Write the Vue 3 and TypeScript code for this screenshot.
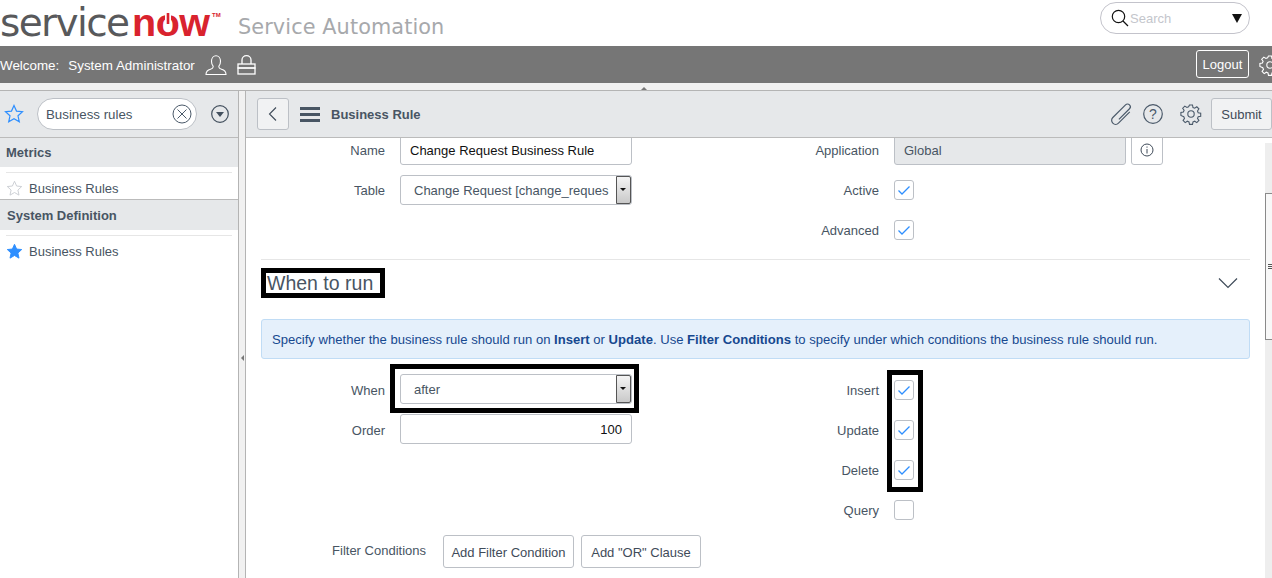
<template>
  <div class="page">
    <header class="brand">
      <svg class="logo" viewBox="0 0 238 46" width="238" height="46">
        <text class="logo-service" x="0" y="36.200" textLength="130" lengthAdjust="spacing">service</text>
        <text class="logo-now" x="132" y="36" textLength="78" lengthAdjust="spacing">now</text>
        <rect x="165" y="13" width="6" height="9" fill="#fff" />
        <rect x="166.700" y="13" width="2.600" height="11" fill="#d9232e" />
        <text class="logo-tm" x="212" y="17">TM</text>
      </svg>
      <div class="product">Service Automation</div>
      <div class="global-search">
        <svg class="search-icon" viewBox="0 0 18 18" width="18" height="18" fill="none" stroke="#111" stroke-width="1.2">
          <circle cx="7.5" cy="7.5" r="6.2" />
          <path d="M12 12l5 5" />
        </svg>
        <span class="search-text">Search</span>
        <span class="search-caret"></span>
      </div>
    </header>

    <div class="topbar">
      <span class="welcome">Welcome:</span>
      <span class="username">System Administrator</span>
      <svg class="user-icon" viewBox="0 0 22 20" width="22" height="20" fill="none" stroke="#fff" stroke-width="1.1">
        <path d="M1 19.5h20c0-3-1.5-4.5-4.5-5.3-2.2-.6-3-1.4-2.6-3 1-1.200 1.600-3 1.600-5C15.500 3 13.500.7 11 .7S6.500 3 6.500 6.200c0 2 .6 3.800 1.600 5 .4 1.600-.4 2.400-2.600 3C2.500 15 1 16.500 1 19.500z" />
      </svg>
      <svg class="lock-icon" viewBox="0 0 19 20" width="19" height="20" fill="none" stroke="#fff" stroke-width="1.3">
        <path d="M5 9V5c0-2.500 2-4.300 4.500-4.300S14 2.500 14 5v4" />
        <rect x="1" y="9" width="17" height="4" />
        <rect x="1" y="13" width="17" height="6" />
      </svg>
      <button class="logout">Logout</button>
      <svg class="gear top-gear" viewBox="0 0 20 20" width="20" height="20"><path :d="gearPath" /><circle cx="10" cy="10" r="3.200" /></svg>
    </div>

    <div class="collapse-strip"><span class="up-caret"></span></div>

    <div class="workspace">
      <aside class="sidebar">
        <div class="filter-bar">
          <svg class="filter-star" viewBox="0 0 20 20" width="20" height="20" fill="none" stroke="#2e8fff" stroke-width="1.200"><path :d="starPath" /></svg>
          <div class="filter-pill">
            <span>Business rules</span>
            <svg viewBox="0 0 20 20" width="20" height="20" fill="none" stroke="#4b5a6a" stroke-width="1"><circle cx="10" cy="10" r="9" /><path d="M5.500 5.500l9 9M14.500 5.500l-9 9" /></svg>
          </div>
          <svg class="filter-menu" viewBox="0 0 18 18" width="18" height="18"><circle cx="9" cy="9" r="8.300" fill="none" stroke="#43505e" stroke-width="1.200" /><path d="M5 7h8l-4 5z" fill="#43505e" /></svg>
        </div>

        <template v-for="group in navGroups" :key="group.title">
          <div class="nav-title" :class="group.cls">{{ group.title }}</div>
          <div class="nav-body" :class="group.cls">
            <div class="nav-rule"></div>
            <div class="nav-item">
              <svg viewBox="0 0 20 20" width="17" height="17" :fill="group.starred ? '#2e8fff' : 'none'" :stroke="group.starred ? '#2e8fff' : '#c9cdd2'" stroke-width="1.100"><path :d="starPath" /></svg>
              <span>Business Rules</span>
            </div>
          </div>
        </template>
      </aside>

      <div class="splitter"><span class="left-caret"></span></div>

      <main class="content">
        <div class="content-head">
          <button class="back-btn">
            <svg viewBox="0 0 10 16" width="10" height="16" fill="none" stroke="#3f4b59" stroke-width="1.100"><path d="M8 1.500L1.500 8 8 14.500" /></svg>
          </button>
          <div class="burger"><i></i><i></i><i></i></div>
          <div class="head-title">Business Rule</div>
          <svg class="clip-icon" viewBox="0 0 20 20" width="20" height="20" fill="none" stroke="#4b5a6a" stroke-width="1.200">
            <path transform="rotate(45 10 10)" d="M14 3V19a4 4 0 0 1-8 0V1a2.800 2.800 0 0 1 5.600 0V16" />
          </svg>
          <svg class="help-icon" viewBox="0 0 20 20" width="20" height="20"><circle cx="10" cy="10" r="9.300" fill="none" stroke="#4b5a6a" stroke-width="1.200" /><text x="10" y="15" text-anchor="middle">?</text></svg>
          <svg class="gear head-gear" viewBox="0 0 20 20" width="20" height="20"><path :d="gearPath" /><circle cx="10" cy="10" r="3.200" /></svg>
          <button class="submit">Submit</button>
        </div>

        <div class="scroller">
          <div class="form">
            <div class="columns first-block">
              <div class="col">
                <div class="row">
                  <label>Name</label>
                  <div class="field">Change Request Business Rule</div>
                </div>
                <div class="row">
                  <label>Table</label>
                  <div class="select">
                    <span>Change Request [change_reques</span>
                    <span class="select-arrow"></span>
                  </div>
                </div>
              </div>
              <div class="col">
                <div class="row">
                  <label>Application</label>
                  <div class="field readonly">Global</div>
                  <button class="info-btn">
                    <svg viewBox="0 0 14 14" width="14" height="14" fill="none" stroke="#3f4b59" stroke-width="1"><circle cx="7" cy="7" r="6" /><path d="M7 6v4.500M7 3.500v1.200" /></svg>
                  </button>
                </div>
                <div v-for="name in ['Active', 'Advanced']" :key="name" class="row">
                  <label>{{ name }}</label>
                  <span class="check"><svg viewBox="0 0 20 20" width="20" height="20" v-html="tick"></svg></span>
                </div>
              </div>
            </div>

            <div class="section-head">
              <h2 class="section-title"><span class="mark-box"></span>When to run</h2>
              <svg viewBox="0 0 20 12" width="20" height="12" fill="none" stroke="#3f4b59" stroke-width="1.200"><path d="M1 1.500l9 9 9-9" /></svg>
            </div>

            <div class="info-bar">Specify whether the business rule should run on <b>Insert</b> or <b>Update</b>. Use <b>Filter Conditions</b> to specify under which conditions the business rule should run.</div>

            <div class="columns second-block">
              <div class="col">
                <div class="row">
                  <label>When</label>
                  <div class="select marked">
                    <span>after</span>
                    <span class="select-arrow"></span>
                    <span class="mark-box"></span>
                  </div>
                </div>
                <div class="row">
                  <label>Order</label>
                  <div class="field number">100</div>
                </div>
              </div>
              <div class="col">
                <div class="check-group">
                  <span class="mark-box"></span>
                  <div v-for="name in ['Insert', 'Update', 'Delete']" :key="name" class="row">
                    <label>{{ name }}</label>
                    <span class="check"><svg viewBox="0 0 20 20" width="20" height="20" v-html="tick"></svg></span>
                  </div>
                </div>
                <div class="row">
                  <label>Query</label>
                  <span class="check"></span>
                </div>
              </div>
            </div>

            <div class="filter-row">
              <label>Filter Conditions</label>
              <button>Add Filter Condition</button>
              <button>Add "OR" Clause</button>
            </div>
          </div>

          <div class="scrollbar">
            <span class="thumb"><i class="grip"></i></span>
          </div>
        </div>
      </main>
    </div>
  </div>
</template>

<script setup lang="ts">
const starPath = 'M10 1.500l2.500 5.600 6 .6-4.500 4.100 1.300 6L10 14.700l-5.300 3.100 1.300-6L1.500 7.700l6-.6z'

const gearPath =
  'M8.500 1h3l.5 2.500 1.700.7 2.100-1.400 2.100 2.100-1.400 2.100.7 1.700 2.500.5v3l-2.500.5-.7 1.700 1.400 2.100-2.100 2.100-2.100-1.400-1.700.7-.5 2.500h-3l-.5-2.500-1.700-.7-2.100 1.400-2.100-2.100 1.400-2.100-.7-1.700L-.1 11.500v-3l2.500-.5.7-1.700-1.400-2.100 2.100-2.100 2.100 1.400 1.700-.7z'

const tick = '<path d="M4.500 10.500l3.500 3.500 7.500-7.500" fill="none" stroke="#2e8fff" stroke-width="1.300" />'

const navGroups = [
  { title: 'Metrics', cls: 'metrics', starred: false },
  { title: 'System Definition', cls: 'system', starred: true }
]
</script>

<style>
html,
body {
  margin: 0;
  height: 100%;
  overflow: hidden;
  background: #fff;
}
</style>

<style scoped>
.page {
  width: 1272px;
  height: 578px;
  overflow: hidden;
  display: flex;
  flex-direction: column;
  font-family: "Liberation Sans", Arial, sans-serif;
  font-size: 14px;
  color: #485563;
}

button {
  font: inherit;
  padding: 0;
  box-sizing: border-box;
  background: #fff;
  border: 1px solid #bcc0c6;
  border-radius: 3px;
  color: #3f4b59;
}

/* header */
.brand {
  height: 46px;
  flex: none;
  display: flex;
  align-items: flex-start;
}

.logo {
  flex: none;
  display: block;
}

.logo-service {
  fill: #58595b;
  font-family: "DejaVu Sans", sans-serif;
  font-size: 39px;
}

.logo-now {
  fill: #d9232e;
  font-size: 39.500px;
  font-weight: bold;
}

.logo-tm {
  fill: #d9232e;
  font-size: 6px;
  font-weight: bold;
}

.product {
  font-family: "DejaVu Sans", Verdana, sans-serif;
  font-size: 20.800px;
  color: #a7a9ac;
  line-height: 24px;
  margin-top: 15px;
  letter-spacing: 0.1px;
}

.global-search {
  box-sizing: border-box;
  width: 150px;
  height: 32px;
  margin: 2px 22px 0 auto;
  border: 1px solid #c3c3cb;
  border-radius: 16px;
  display: flex;
  align-items: center;
  padding: 0 7px 0 10px;
}

.search-text {
  color: #c4c6cc;
  margin-left: 1px;
  font-size: 13px;
}

.search-caret {
  margin-left: auto;
  border: 5px solid transparent;
  border-top: 9px solid #111;
  border-bottom: 0;
}

/* gray bar */
.topbar {
  height: 37px;
  flex: none;
  box-sizing: border-box;
  background: #767676;
  color: #fff;
  display: flex;
  align-items: center;
  font-size: 13.400px;
}

.welcome,
.username {
  padding-top: 1px;
}

.username {
  margin-left: 9px;
}

.user-icon {
  margin-left: 10px;
}

.lock-icon {
  margin-left: 10px;
}

.logout {
  margin-left: auto;
  margin-top: -1px;
  width: 53px;
  height: 28px;
  background: transparent;
  border-color: #fff;
  color: #fff;
  font-size: 13px;
  padding-top: 1px;
}

.gear {
  fill: none;
  stroke: #4b5a6a;
  stroke-width: 1.100;
  overflow: visible;
}

.top-gear {
  stroke: #fff;
  flex: none;
  margin: 0 -8px 0 11px;
}

.collapse-strip {
  height: 8px;
  flex: none;
  box-sizing: border-box;
  background: #f1f1f1;
  border-bottom: 1px solid #b4b4b4;
  display: flex;
  justify-content: center;
  padding-left: 15px;
}

.up-caret {
  margin-top: 2px;
  border: 3px solid transparent;
  border-bottom: 3px solid #777;
  border-top: 0;
}

.workspace {
  flex: 1;
  min-height: 0;
  display: flex;
}

/* left nav */
.sidebar {
  width: 238px;
  flex: none;
  box-sizing: border-box;
  overflow: hidden;
  font-size: 13px;
}

.filter-bar {
  height: 47px;
  box-sizing: border-box;
  background: #e6e8ea;
  border-bottom: 1px solid #bbb;
  display: flex;
  align-items: center;
  padding: 0 9px 0 4px;
}

.filter-pill {
  box-sizing: border-box;
  width: 160px;
  height: 32px;
  margin-left: 13px;
  background: #fff;
  border: 1px solid #bcc0c6;
  border-radius: 16px;
  display: flex;
  align-items: center;
  justify-content: space-between;
  padding: 0 4px 0 8px;
  font-size: 13.300px;
}

.filter-pill span {
  padding-top: 1px;
}

.filter-menu {
  margin-left: auto;
}

.nav-title {
  background: #e6e8ea;
  font-weight: bold;
  font-size: 13px;
  padding-left: 6px;
  height: 29px;
  line-height: 29px;
}

.nav-title.system {
  padding-left: 7px;
  height: 30px;
  line-height: 32px;
}

.nav-body {
  padding: 5px 6px 0;
  background: #fff;
}

.nav-body.metrics {
  height: 27px;
  border-bottom: 1px solid #bbb;
  overflow: hidden;
}

.nav-rule {
  height: 1px;
  background: #e6e6e6;
}

.nav-item {
  display: flex;
  align-items: center;
  gap: 6px;
  height: 31px;
}

/* splitter */
.splitter {
  width: 8px;
  flex: none;
  box-sizing: border-box;
  background: #f1f1f1;
  border-left: 1px solid #b4b4b4;
  border-right: 1px solid #b4b4b4;
  display: flex;
  align-items: flex-start;
  justify-content: center;
}

.left-caret {
  margin-top: 264px;
  border: 3px solid transparent;
  border-right: 3px solid #777;
  border-left: 0;
}

/* record */
.content {
  flex: 1;
  min-width: 0;
  display: flex;
  flex-direction: column;
}

.content-head {
  height: 47px;
  flex: none;
  box-sizing: border-box;
  background: #e6e8ea;
  border-bottom: 1px solid #bbb;
  display: flex;
  align-items: center;
  padding-left: 11px;
}

.back-btn {
  width: 32px;
  height: 32px;
  background: #f1f2f3;
  display: flex;
  align-items: center;
  justify-content: center;
}

.burger {
  width: 20px;
  margin-left: 11px;
  display: flex;
  flex-direction: column;
  gap: 3px;
}

.burger i {
  height: 3px;
  background: #485563;
}

.head-title {
  margin-left: 11px;
  font-weight: bold;
  font-size: 13px;
}

.clip-icon {
  margin-left: auto;
  overflow: visible;
}

.help-icon {
  margin-left: 11px;
}

.help-icon text {
  font-size: 14px;
  fill: #4b5a6a;
}

.head-gear {
  margin-left: 18px;
}

.submit {
  margin-left: 10px;
  width: 61px;
  height: 32px;
  background: #f1f2f3;
  font-size: 13px;
}

.scroller {
  flex: 1;
  min-height: 0;
  display: flex;
  overflow: hidden;
  position: relative;
}

.form {
  width: 989px;
  margin: -8px 0 0 15px;
  flex: none;
}

.columns {
  display: flex;
}

.col {
  width: 494px;
  flex: none;
}

.row {
  height: 40px;
  display: flex;
  align-items: center;
}

.row label {
  width: 124px;
  flex: none;
  text-align: right;
  margin-right: 15px;
  font-size: 13px;
}

.field,
.select {
  box-sizing: border-box;
  width: 232px;
  height: 30px;
  border: 1px solid #bcc0c6;
  border-radius: 3px;
  background: #fff;
  display: flex;
  align-items: center;
  font-size: 13px;
  color: #111;
  padding-left: 9px;
}

.second-block .field,
.second-block .select {
  margin-top: -2px;
}

.readonly {
  background: #e6e8ea;
  color: #485563;
}

.info-btn {
  width: 32px;
  height: 30px;
  margin-left: 5px;
  display: flex;
  align-items: center;
  justify-content: center;
}

.select {
  position: relative;
  padding-left: 13px;
  color: #485563;
  white-space: nowrap;
}

.select-arrow {
  position: absolute;
  right: 0;
  top: 0;
  bottom: 0;
  width: 15px;
  box-sizing: border-box;
  border: 1px solid #555;
  border-radius: 0 2px 2px 0;
  background: linear-gradient(#f4f4f4, #c9c9c9);
}

.select-arrow::after {
  content: "";
  position: absolute;
  left: 3px;
  top: 11px;
  border: 3px solid transparent;
  border-top: 3px solid #111;
  border-bottom: 0;
}

.number {
  justify-content: flex-end;
  padding-right: 9px;
}

.check {
  box-sizing: border-box;
  width: 20px;
  height: 20px;
  border: 1px solid #bcc0c6;
  border-radius: 3px;
  background: #fff;
  display: block;
  overflow: hidden;
}

.check svg {
  display: block;
  margin: -1px;
}

.section-head {
  border-top: 1px solid #e6e6e6;
  margin-top: 9px;
  height: 60px;
  box-sizing: border-box;
  display: flex;
  align-items: flex-start;
  justify-content: space-between;
  padding: 12px 12px 0 6px;
}

.section-head svg {
  margin-top: 5px;
}

.section-title {
  position: relative;
  margin: 0;
  font-size: 19.500px;
  font-weight: normal;
  line-height: 22px;
  color: #485563;
}

.mark-box {
  position: absolute;
  border: 5px solid #000;
  pointer-events: none;
}

.section-title .mark-box {
  left: -6px;
  top: -4px;
  right: -12px;
  bottom: -4px;
}

.info-bar {
  box-sizing: border-box;
  height: 40px;
  background: #e5f0fb;
  border: 1px solid #c0dcf5;
  border-radius: 3px;
  padding-left: 10px;
  line-height: 40px;
  font-size: 13.080px;
  color: #16488f;
  white-space: nowrap;
}

.second-block {
  margin-top: 11px;
}

.marked .mark-box {
  left: -11px;
  top: -11px;
  right: -8px;
  bottom: -10px;
}

.check-group {
  position: relative;
}

.check-group .mark-box {
  left: 132px;
  top: 0;
  width: 36px;
  height: 122px;
  box-sizing: border-box;
}

.filter-row {
  display: flex;
  align-items: center;
  margin-top: 5px;
  height: 33px;
}

.filter-row label {
  width: 165px;
  text-align: right;
  margin-right: 17px;
  font-size: 13px;
  margin-top: -3px;
  white-space: nowrap;
  flex: none;
}

.filter-row button {
  height: 33px;
  margin-right: 7px;
  padding-top: 2px;
  font-size: 13px;
}

.filter-row button:first-of-type {
  width: 131px;
}

.filter-row button:last-of-type {
  width: 120px;
}

.scrollbar {
  position: absolute;
  right: 0;
  top: 5px;
  bottom: 0;
  width: 7px;
  background: #eee;
}

.thumb {
  position: absolute;
  left: 0;
  right: 0;
  top: 50px;
  height: 147px;
  box-sizing: border-box;
  background: #f8f8f8;
  border: 1px solid #8a8a8a;
  border-right: 0;
}

.grip {
  position: absolute;
  right: 0;
  top: 70px;
  width: 4px;
  height: 6px;
  background: repeating-linear-gradient(#555 0 1px, transparent 1px 2px);
}
</style>
